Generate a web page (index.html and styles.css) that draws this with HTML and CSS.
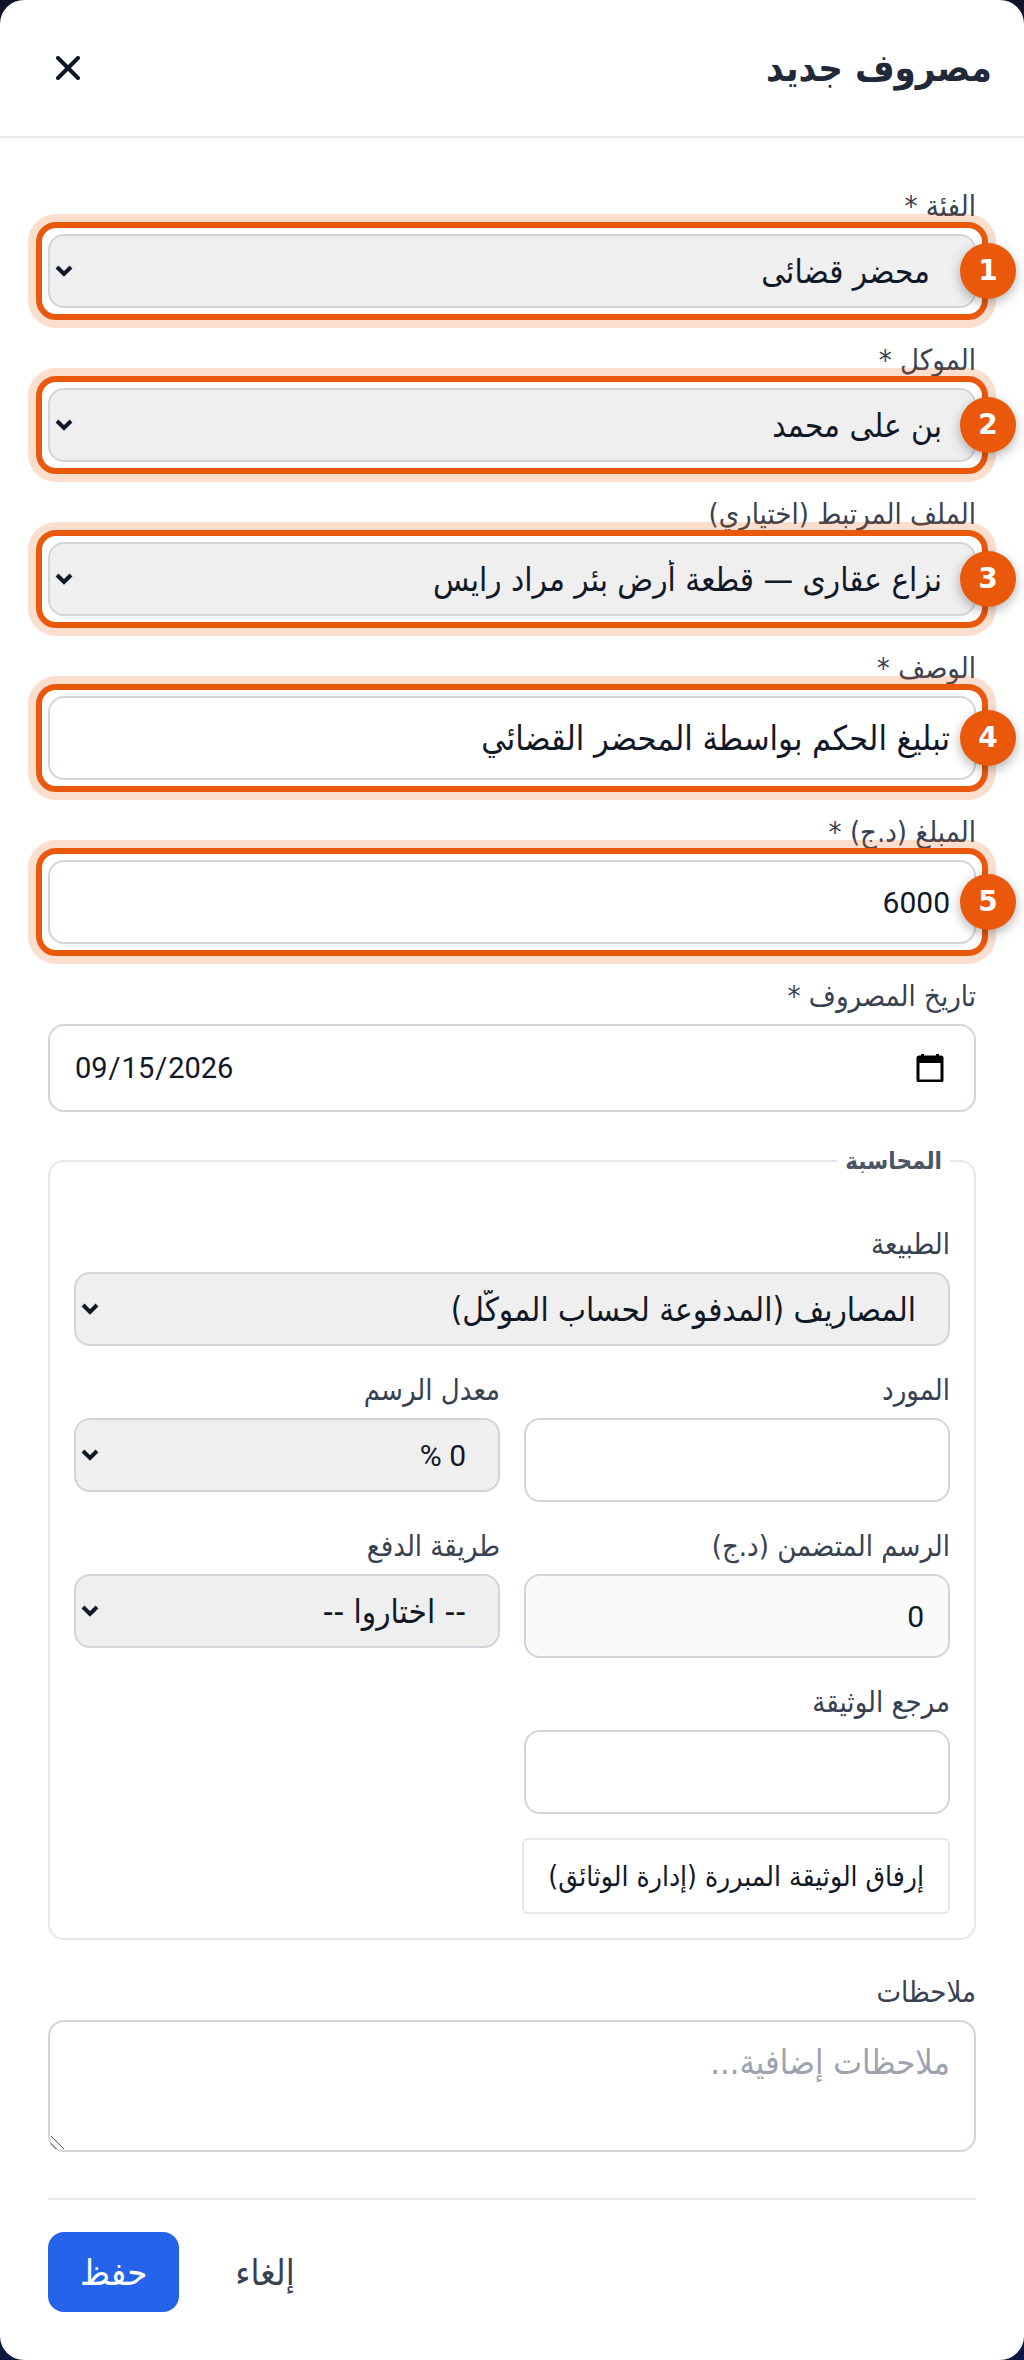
FILE: index.html
```html
<!DOCTYPE html>
<html lang="ar" dir="rtl">
<head>
<meta charset="utf-8">
<meta name="viewport" content="width=device-width, initial-scale=1">
<title>مصروف جديد</title>
<link rel="stylesheet" href="styles.css">
</head>
<body>
<main class="modal">
  <header class="modal-header">
    <h1 class="modal-title">مصروف جديد</h1>
    <button class="close" type="button" aria-label="إغلاق">
      <svg width="24" height="24" viewBox="0 0 24 24" fill="none" stroke="currentColor" stroke-width="4" stroke-linecap="round"><path d="M2 2 22 22M22 2 2 22"/></svg>
    </button>
  </header>
  <form class="form">
    <div class="field">
      <label for="category">الفئة *</label>
      <div class="control highlight">
        <select id="category" class="indented"><option>محضر قضائى</option></select>
        <svg class="chevron" viewBox="0 0 18 13"><path d="M2 2 9 9 16 2"/></svg>
        <span class="badge">1</span>
      </div>
    </div>
    <div class="field">
      <label for="client">الموكل *</label>
      <div class="control highlight">
        <select id="client"><option>بن على محمد</option></select>
        <svg class="chevron" viewBox="0 0 18 13"><path d="M2 2 9 9 16 2"/></svg>
        <span class="badge">2</span>
      </div>
    </div>
    <div class="field">
      <label for="case">الملف المرتبط (اختياري)</label>
      <div class="control highlight">
        <select id="case"><option>نزاع عقارى — قطعة أرض بئر مراد رايس</option></select>
        <svg class="chevron" viewBox="0 0 18 13"><path d="M2 2 9 9 16 2"/></svg>
        <span class="badge">3</span>
      </div>
    </div>
    <div class="field">
      <label for="description">الوصف *</label>
      <div class="control highlight">
        <input id="description" type="text" value="تبليغ الحكم بواسطة المحضر القضائي">
        <span class="badge">4</span>
      </div>
    </div>
    <div class="field">
      <label for="amount">المبلغ (د.ج) *</label>
      <div class="control highlight">
        <input id="amount" class="numeric" type="text" inputmode="decimal" value="6000">
        <span class="badge">5</span>
      </div>
    </div>
    <div class="field">
      <label for="date">تاريخ المصروف *</label>
      <input id="date" class="numeric date" type="date" value="2026-09-15">
    </div>
    <fieldset class="accounting">
      <legend>المحاسبة</legend>
      <div class="grid">
        <div class="field wide">
          <label for="nature">الطبيعة</label>
          <div class="control">
            <select id="nature"><option>المصاريف (المدفوعة لحساب الموكّل)</option></select>
            <svg class="chevron" viewBox="0 0 18 13"><path d="M2 2 9 9 16 2"/></svg>
          </div>
        </div>
        <div class="field">
          <label for="supplier">المورد</label>
          <input id="supplier" type="text">
        </div>
        <div class="field">
          <label for="rate">معدل الرسم</label>
          <div class="control">
            <select id="rate" class="numeric"><option>0 %</option></select>
            <svg class="chevron" viewBox="0 0 18 13"><path d="M2 2 9 9 16 2"/></svg>
          </div>
        </div>
        <div class="field">
          <label for="tax">الرسم المتضمن (د.ج)</label>
          <input id="tax" class="numeric" type="text" value="0" readonly>
        </div>
        <div class="field">
          <label for="payment">طريقة الدفع</label>
          <div class="control">
            <select id="payment"><option>-- اختاروا --</option></select>
            <svg class="chevron" viewBox="0 0 18 13"><path d="M2 2 9 9 16 2"/></svg>
          </div>
        </div>
        <div class="field">
          <label for="reference">مرجع الوثيقة</label>
          <input id="reference" type="text">
        </div>
      </div>
      <button class="attach" type="button">إرفاق الوثيقة المبررة (إدارة الوثائق)</button>
    </fieldset>
    <div class="field">
      <label for="notes">ملاحظات</label>
      <textarea id="notes" placeholder="ملاحظات إضافية..."></textarea>
    </div>
    <footer class="actions">
      <button class="cancel" type="button">إلغاء</button>
      <button class="save" type="submit">حفظ</button>
    </footer>
  </form>
</main>
</body>
</html>
```
FILE: styles.css
```css
* { box-sizing: border-box; }
body {
  margin: 0;
  background: linear-gradient(#13142b, #0b1740);
  color: #111827;
  font-family: "DejaVu Sans Condensed", "DejaVu Sans", sans-serif;
  font-size: 33px;
}
input, select, textarea, button { font: inherit; color: inherit; margin: 0; }
button { cursor: pointer; }
.modal { background: #fff; border-radius: 24px; }
.modal-header {
  display: flex;
  align-items: center;
  justify-content: space-between;
  height: 138px;
  padding: 0 32px 0 48px;
  border-bottom: 2px solid #e5e7eb;
}
.modal-title { margin: 0; color: #1f2937; font-size: 38px; font-weight: 700; line-height: 56px; }
.close { display: flex; padding: 8px; border: 0; background: none; }
.form { display: flex; flex-direction: column; gap: 32px; padding: 48px; }
.field { display: flex; flex-direction: column; gap: 8px; min-width: 0; }
.field label { color: #374151; font-size: 29px; line-height: 40px; }
.control { display: grid; position: relative; }
.control > * { grid-area: 1 / 1; }
input, select, textarea {
  width: 100%;
  height: 84px;
  padding: 0 24px;
  border: 2px solid #d1d5db;
  border-radius: 16px;
  background: #fff;
}
input, textarea { font-size: 34px; }
select { height: 74px; padding: 0 32px; background: #efefef; appearance: none; }
select.indented { padding-right: 44px; }
input[readonly] { background: #fafafa; }
.numeric { font-family: Roboto, sans-serif; font-size: 30px; }
.date { height: 88px; direction: ltr; font-size: 29px; }
.date::-webkit-calendar-picker-indicator {
  width: 40px;
  height: 28px;
  padding: 0;
  background: url("data:image/svg+xml,%3Csvg xmlns='http://www.w3.org/2000/svg' viewBox='0 0 40 28'%3E%3Crect x='8' y='3' width='24' height='24' rx='1' fill='none' stroke='%23000' stroke-width='3'/%3E%3Cpath d='M7 3h26v6H7zM11 0h3v4h-3zM26 0h3v4h-3z'/%3E%3C/svg%3E") center / 40px 28px no-repeat;
}
.chevron {
  justify-self: end;
  align-self: center;
  width: 18px;
  height: 13px;
  margin-left: 7px;
  fill: none;
  stroke: #111827;
  stroke-width: 4;
  pointer-events: none;
}
.highlight::after {
  content: "";
  position: absolute;
  inset: -12px;
  border: 6px solid #ea580c;
  border-radius: 20px;
  box-shadow: 0 0 0 8px rgba(234, 88, 12, 0.2);
  pointer-events: none;
}
.badge {
  position: absolute;
  z-index: 1;
  top: 50%;
  right: -40px;
  width: 56px;
  height: 56px;
  margin-top: -28px;
  border-radius: 50%;
  background: #ea580c;
  box-shadow: 0 4px 12px rgba(0, 0, 0, 0.3);
  color: #fff;
  font-family: "DejaVu Sans", sans-serif;
  font-size: 28px;
  font-weight: 700;
  line-height: 56px;
  text-align: center;
}
.accounting {
  min-width: 0;
  margin: 0;
  padding: 46px 24px 24px;
  border: 2px solid #e5e7eb;
  border-radius: 16px;
}
.accounting legend { padding: 0 8px; color: #4b5563; font-size: 24px; font-weight: 700; line-height: 34px; }
.grid { display: grid; grid-template-columns: 1fr 1fr; gap: 24px; }
.wide { grid-column: 1 / -1; }
.attach {
  height: 76px;
  margin-top: 24px;
  padding: 0 24px;
  border: 2px solid #e5e7eb;
  border-radius: 6px;
  background: #fff;
  font-size: 28px;
}
textarea { display: block; height: 132px; padding: 16px 24px; line-height: 48px; resize: both; }
textarea::placeholder { color: #9ca3af; opacity: 1; }
textarea::-webkit-resizer {
  background: url("data:image/svg+xml,%3Csvg xmlns='http://www.w3.org/2000/svg' viewBox='0 0 16 16'%3E%3Cpath d='M1 1l14 14M1 9l6 6' stroke='%23444' stroke-width='1'/%3E%3C/svg%3E") center / 100% 100% no-repeat;
}
.actions {
  display: flex;
  justify-content: flex-end;
  gap: 24px;
  margin-top: 14px;
  padding-top: 32px;
  border-top: 2px solid #e5e7eb;
}
.actions button { height: 80px; padding: 0 32px; border: 0; border-radius: 16px; font-size: 36px; }
.cancel { background: none; color: #374151; }
.save { background: #2563eb; color: #fff; }
```
